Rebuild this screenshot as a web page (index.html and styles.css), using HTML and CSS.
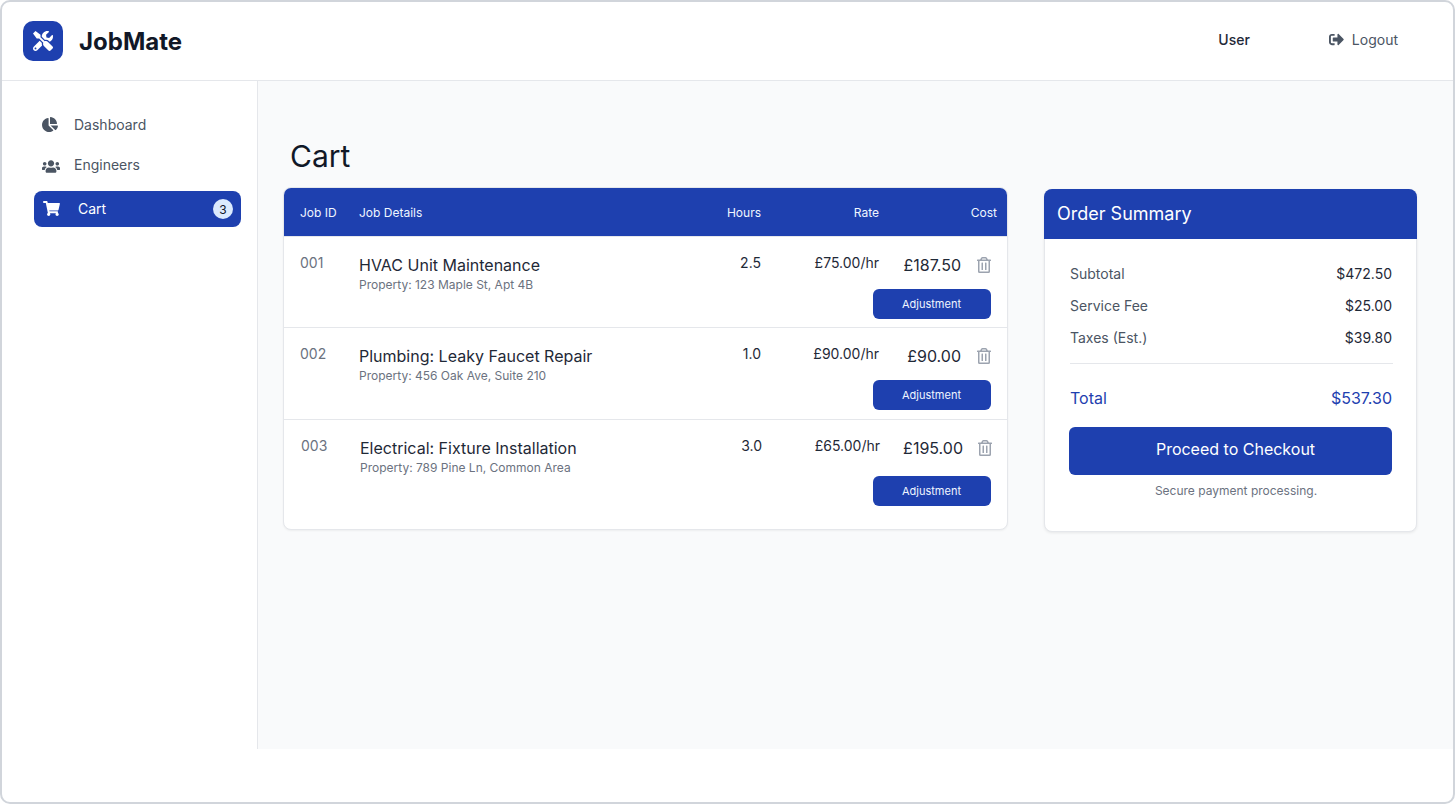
FILE: index.html
```html
<!DOCTYPE html>
<html lang="en">
<head>
    <meta charset="UTF-8">
    <meta name="viewport" content="width=device-width, initial-scale=1.0">
    <title>JobMate - Cart</title>
    <link rel="stylesheet" href="styles.css">
</head>
<body>
    <div class="frame">
        <header class="topbar">
            <div class="brand">
                <div class="brand-logo">
                    <svg class="icon-tools" viewBox="0 0 512 512"><path d="M501.1 395.7L384 278.6c-23.1-23.1-57.6-27.6-85.4-13.9L192 158.1V96L64 0 0 64l96 128h62.1l106.6 106.6c-13.6 27.8-9.2 62.3 13.9 85.4l117.1 117.1c14.6 14.6 38.2 14.6 52.7 0l52.7-52.7c14.5-14.6 14.5-38.2 0-52.7zM331.7 225c28.3 0 54.9 11 74.9 31l19.4 19.4c15.8-6.9 30.8-16.5 43.8-29.5 37.1-37.1 49.7-89.3 37.9-136.7-2.2-9-13.5-12.1-20.1-5.5l-74.4 74.4-67.9-11.3L334 98.9l74.4-74.4c6.6-6.6 3.4-17.9-5.7-20.2-47.4-11.7-99.6.9-136.6 37.9-28.5 28.5-41.9 66.1-41.2 103.6l82.1 82.1c8.1-1.9 16.5-2.9 24.7-2.9zm-103.9 82l-56.7-56.7L18.7 402.8c-25 25-25 65.5 0 90.5s65.5 25 90.5 0l123.6-123.6c-7.6-19.9-9.9-41.6-5-62.7zM64 472c-13.2 0-24-10.8-24-24 0-13.3 10.7-24 24-24s24 10.7 24 24c0 13.2-10.7 24-24 24z"/></svg>
                </div>
                <span class="brand-name">JobMate</span>
            </div>
            <div class="topbar-right">
                <span class="user-name">User</span>
                <a class="logout" href="#">
                    <svg class="icon-logout" viewBox="0 0 512 512"><path d="M497 273L329 441c-15 15-41 4.5-41-17v-96H152c-13.3 0-24-10.7-24-24v-96c0-13.3 10.7-24 24-24h136V88c0-21.4 25.9-32 41-17l168 168c9.3 9.4 9.3 24.6 0 34zM192 436v-40c0-6.6-5.4-12-12-12H96c-17.7 0-32-14.3-32-32V160c0-17.7 14.3-32 32-32h84c6.6 0 12-5.4 12-12V76c0-6.6-5.4-12-12-12H96c-53 0-96 43-96 96v192c0 53 43 96 96 96h84c6.6 0 12-5.4 12-12z"/></svg>
                    Logout
                </a>
            </div>
        </header>

        <div class="shell">
            <nav class="sidebar">
                <a class="nav-item" href="#">
                    <svg class="nav-icon" viewBox="0 0 544 512"><path d="M527.79 288H290.5l158.03 158.03c6.04 6.04 15.98 6.53 22.19.68 38.7-36.46 65.32-85.61 73.13-140.86 1.34-9.46-6.51-17.85-16.06-17.85zm-15.83-64.8C503.72 103.74 408.26 8.28 288.8.04 279.68-.59 272 7.1 272 16.24V240h223.77c9.14 0 16.82-7.68 16.19-16.8zM224 288V50.71c0-9.55-8.39-17.4-17.84-16.06C86.99 51.49-4.1 155.6.14 280.37 4.5 408.51 114.83 513.59 243.03 511.98c50.4-.63 96.97-16.87 135.26-44.03 7.9-5.6 8.42-17.23 1.57-24.08L224 288z"/></svg>
                    Dashboard
                </a>
                <a class="nav-item" href="#">
                    <svg class="nav-icon icon-users" viewBox="0 0 640 512"><path d="M96 224c35.3 0 64-28.7 64-64s-28.7-64-64-64-64 28.7-64 64 28.7 64 64 64zm448 0c35.3 0 64-28.7 64-64s-28.7-64-64-64-64 28.7-64 64 28.7 64 64 64zm32 32h-64c-17.6 0-33.5 7.1-45.1 18.6 40.3 22.1 68.9 62 75.1 109.4h66c17.7 0 32-14.3 32-32v-32c0-35.3-28.7-64-64-64zm-256 0c61.9 0 112-50.1 112-112S381.9 32 320 32 208 82.1 208 144s50.1 112 112 112zm76.8 32h-8.3c-20.8 10-43.9 16-68.5 16s-47.6-6-68.5-16h-8.3C179.6 288 128 339.6 128 403.2V432c0 26.5 21.5 48 48 48h288c26.5 0 48-21.5 48-48v-28.8c0-63.6-51.6-115.2-115.2-115.2zm-223.7-13.4C161.5 263.1 145.6 256 128 256H64c-35.3 0-64 28.7-64 64v32c0 17.7 14.3 32 32 32h65.9c6.3-47.4 34.9-87.3 75.2-109.4z"/></svg>
                    Engineers
                </a>
                <a class="nav-item active" href="#">
                    <svg class="nav-icon" viewBox="0 0 576 512"><path d="M528.12 301.319l47.273-208C578.806 78.301 567.391 64 551.99 64H159.208l-9.166-44.81C147.758 8.021 137.93 0 126.529 0H24C10.745 0 0 10.745 0 24v16c0 13.255 10.745 24 24 24h69.883l70.248 343.435C147.325 417.1 136 435.222 136 456c0 30.928 25.072 56 56 56s56-25.072 56-56c0-15.674-6.447-29.835-16.824-40h209.647C430.447 426.165 424 440.326 424 456c0 30.928 25.072 56 56 56s56-25.072 56-56c0-22.172-12.888-41.332-31.579-50.405l5.517-24.276c3.413-15.018-8.002-29.319-23.403-29.319H218.117l-6.545-32h293.145c11.206 0 20.92-7.754 23.403-18.681z"/></svg>
                    Cart
                    <span class="nav-badge">3</span>
                </a>
            </nav>

            <main class="content">
                <h1 class="page-title">Cart</h1>
                <div class="columns">
                    <section class="jobs-card">
                        <div class="jobs-head">
                            <span>Job ID</span>
                            <span>Job Details</span>
                            <span class="right">Hours</span>
                            <span class="right">Rate</span>
                            <span class="right">Cost</span>
                        </div>

                        <div class="job-row">
                            <span class="job-id">001</span>
                            <div class="job-details">
                                <div class="job-title">HVAC Unit Maintenance</div>
                                <div class="job-property">Property: 123 Maple St, Apt 4B</div>
                            </div>
                            <span class="job-num">2.5</span>
                            <span class="job-num">£75.00/hr</span>
                            <div class="job-cost">
                                £187.50
                                <svg class="icon-trash" viewBox="0 0 448 512"><path d="M268 416h24a12 12 0 0 0 12-12V188a12 12 0 0 0-12-12h-24a12 12 0 0 0-12 12v216a12 12 0 0 0 12 12zM432 80h-82.41l-34-56.7A48 48 0 0 0 274.41 0H173.59a48 48 0 0 0-41.16 23.3L98.41 80H16A16 16 0 0 0 0 96v16a16 16 0 0 0 16 16h16v336a48 48 0 0 0 48 48h288a48 48 0 0 0 48-48V128h16a16 16 0 0 0 16-16V96a16 16 0 0 0-16-16zM171.84 50.91A6 6 0 0 1 177 48h94a6 6 0 0 1 5.15 2.91L293.61 80H154.39zM368 464H80V128h288zm-212-48h24a12 12 0 0 0 12-12V188a12 12 0 0 0-12-12h-24a12 12 0 0 0-12 12v216a12 12 0 0 0 12 12z"/></svg>
                            </div>
                            <button class="adjust-btn">Adjustment</button>
                        </div>

                        <div class="job-row">
                            <span class="job-id">002</span>
                            <div class="job-details">
                                <div class="job-title">Plumbing: Leaky Faucet Repair</div>
                                <div class="job-property">Property: 456 Oak Ave, Suite 210</div>
                            </div>
                            <span class="job-num">1.0</span>
                            <span class="job-num">£90.00/hr</span>
                            <div class="job-cost">
                                £90.00
                                <svg class="icon-trash" viewBox="0 0 448 512"><path d="M268 416h24a12 12 0 0 0 12-12V188a12 12 0 0 0-12-12h-24a12 12 0 0 0-12 12v216a12 12 0 0 0 12 12zM432 80h-82.41l-34-56.7A48 48 0 0 0 274.41 0H173.59a48 48 0 0 0-41.16 23.3L98.41 80H16A16 16 0 0 0 0 96v16a16 16 0 0 0 16 16h16v336a48 48 0 0 0 48 48h288a48 48 0 0 0 48-48V128h16a16 16 0 0 0 16-16V96a16 16 0 0 0-16-16zM171.84 50.91A6 6 0 0 1 177 48h94a6 6 0 0 1 5.15 2.91L293.61 80H154.39zM368 464H80V128h288zm-212-48h24a12 12 0 0 0 12-12V188a12 12 0 0 0-12-12h-24a12 12 0 0 0-12 12v216a12 12 0 0 0 12 12z"/></svg>
                            </div>
                            <button class="adjust-btn">Adjustment</button>
                        </div>

                        <div class="job-row last">
                            <span class="job-id">003</span>
                            <div class="job-details">
                                <div class="job-title">Electrical: Fixture Installation</div>
                                <div class="job-property">Property: 789 Pine Ln, Common Area</div>
                            </div>
                            <span class="job-num">3.0</span>
                            <span class="job-num">£65.00/hr</span>
                            <div class="job-cost">
                                £195.00
                                <svg class="icon-trash" viewBox="0 0 448 512"><path d="M268 416h24a12 12 0 0 0 12-12V188a12 12 0 0 0-12-12h-24a12 12 0 0 0-12 12v216a12 12 0 0 0 12 12zM432 80h-82.41l-34-56.7A48 48 0 0 0 274.41 0H173.59a48 48 0 0 0-41.16 23.3L98.41 80H16A16 16 0 0 0 0 96v16a16 16 0 0 0 16 16h16v336a48 48 0 0 0 48 48h288a48 48 0 0 0 48-48V128h16a16 16 0 0 0 16-16V96a16 16 0 0 0-16-16zM171.84 50.91A6 6 0 0 1 177 48h94a6 6 0 0 1 5.15 2.91L293.61 80H154.39zM368 464H80V128h288zm-212-48h24a12 12 0 0 0 12-12V188a12 12 0 0 0-12-12h-24a12 12 0 0 0-12 12v216a12 12 0 0 0 12 12z"/></svg>
                            </div>
                            <button class="adjust-btn">Adjustment</button>
                        </div>
                    </section>

                    <aside class="summary-card">
                        <h2 class="summary-title">Order Summary</h2>
                        <div class="summary-body">
                            <div class="summary-row"><span>Subtotal</span><span class="summary-value">$472.50</span></div>
                            <div class="summary-row"><span>Service Fee</span><span class="summary-value">$25.00</span></div>
                            <div class="summary-row"><span>Taxes (Est.)</span><span class="summary-value">$39.80</span></div>
                            <div class="summary-total"><span>Total</span><span>$537.30</span></div>
                            <button class="checkout-btn">Proceed to Checkout</button>
                            <p class="secure-note">Secure payment processing.</p>
                        </div>
                    </aside>
                </div>
            </main>
        </div>
    </div>
</body>
</html>
```

FILE: styles.css
```css
* {
    box-sizing: border-box;
}

body {
    font-family: Inter, "Liberation Sans", sans-serif;
    margin: 0;
    background-color: #fff;
    color: #111827;
}

a {
    text-decoration: none;
}

.frame {
    width: 1455px;
    height: 804px;
    border: 2px solid #d1d5db;
    border-radius: 10px;
    overflow: hidden;
    background-color: #fff;
}

.topbar {
    display: flex;
    justify-content: space-between;
    align-items: center;
    height: 79px;
    padding: 0 55px 0 21px;
    border-bottom: 1px solid #e5e7eb;
}

.brand {
    display: flex;
    align-items: center;
    gap: 16px;
}

.brand-logo {
    display: flex;
    align-items: center;
    justify-content: center;
    width: 40px;
    height: 40px;
    border-radius: 10px;
    background-color: #1e40af;
}

.icon-tools {
    width: 20px;
    height: 20px;
    fill: #fff;
}

.brand-name {
    font-size: 24px;
    font-weight: 700;
}

.topbar-right {
    display: flex;
    align-items: center;
    gap: 79px;
    margin-bottom: 3px;
    font-size: 14px;
}

.user-name {
    font-weight: 500;
    color: #1f2937;
}

.logout {
    display: flex;
    align-items: center;
    gap: 8px;
    color: #4b5563;
}

.icon-logout {
    width: 15px;
    height: 15px;
    fill: #4b5563;
}

.shell {
    display: flex;
    height: 668px;
}

.sidebar {
    flex: none;
    display: flex;
    flex-direction: column;
    gap: 4px;
    width: 256px;
    padding: 26px 16px 0 32px;
    border-right: 1px solid #e5e7eb;
}

.nav-item {
    display: flex;
    align-items: center;
    height: 36px;
    padding: 0 0 1px 7px;
    font-size: 14px;
    color: #4b5563;
}

.nav-icon {
    flex: none;
    width: 18px;
    height: 15px;
    margin-right: 15px;
    fill: #4b5563;
}

.nav-icon.icon-users {
    margin: 4px 14px 0 1px;
}

.nav-item.active {
    margin-top: 4px;
    padding: 0 8px 1px 9px;
    border-radius: 8px;
    background-color: #1e40af;
    color: #fff;
}

.nav-item.active .nav-icon {
    width: 17px;
    margin-right: 18px;
    fill: #fff;
}

.nav-badge {
    display: flex;
    align-items: center;
    justify-content: center;
    width: 20px;
    height: 20px;
    margin: 1px 0 0 auto;
    border-radius: 50%;
    background-color: #dbeafe;
    color: #111827;
    font-size: 12px;
}

.content {
    flex: 1;
    padding: 57px 36px 0 25px;
    background-color: #f9fafb;
}

.page-title {
    margin: 0 0 13px 7px;
    font-size: 30px;
    line-height: 36px;
    font-weight: 400;
}

.columns {
    display: flex;
    align-items: flex-start;
    gap: 36px;
}

.jobs-card {
    width: 725px;
    height: 343px;
    border: 1px solid #e5e7eb;
    border-radius: 8px;
    overflow: hidden;
    background-color: #fff;
    box-shadow: 0 1px 2px rgba(0, 0, 0, 0.05);
}

.jobs-head,
.job-row {
    display: grid;
    grid-template-columns: 59px 1fr 80px 118px 112px;
}

.jobs-head {
    grid-template-columns: 59px 1fr 80px 118px 118px;
    align-items: center;
    height: 49px;
    padding: 0 10px 0 16px;
    border-bottom: 1px solid #e5e7eb;
    background-color: #1e40af;
    color: #eff6ff;
    font-size: 12px;
}

.right {
    text-align: right;
}

.job-row {
    grid-template-rows: 24px auto;
    row-gap: 12px;
    padding: 16px 16px 8px 16px;
    border-bottom: 1px solid #e5e7eb;
}

.job-row:nth-child(3) {
    padding-bottom: 9px;
}

.job-row.last {
    row-gap: 16px;
    padding: 16px 15px 0 17px;
    border-bottom: none;
}

.job-id {
    font-size: 14px;
    line-height: 20px;
    color: #6b7280;
}

.job-details {
    grid-column: 2;
    grid-row: 1 / 3;
}

.job-title {
    font-size: 16px;
    line-height: 24px;
    color: #1f2937;
}

.job-property {
    font-size: 12px;
    line-height: 16px;
    color: #6b7280;
}

.job-num {
    font-size: 14px;
    line-height: 20px;
    text-align: right;
    color: #1f2937;
}

.job-cost {
    display: flex;
    justify-content: flex-end;
    align-items: center;
    gap: 16px;
    font-size: 16px;
    line-height: 24px;
    color: #1f2937;
}

.job-row.last .job-cost {
    gap: 15px;
}

.icon-trash {
    flex: none;
    width: 14px;
    height: 16px;
    fill: #9ca3af;
}

.adjust-btn {
    grid-column: 4 / 6;
    justify-self: end;
    width: 118px;
    height: 30px;
    padding: 0 1px 0 0;
    border: none;
    border-radius: 6px;
    background-color: #1e40af;
    color: #eff6ff;
    font-family: inherit;
    font-size: 11px;
    cursor: pointer;
}

.job-row.last .adjust-btn {
    margin-right: 1px;
}

.summary-card {
    width: 373px;
    height: 343px;
    margin-top: 2px;
    border-radius: 8px;
    border: 1px solid #e5e7eb;
    background-color: #fff;
    box-shadow: 0 1px 3px rgba(0, 0, 0, 0.08);
}

.summary-title {
    margin: -1px -1px 0;
    padding: 0 13px;
    height: 50px;
    border-radius: 8px 8px 0 0;
    background-color: #1e40af;
    color: #fff;
    font-size: 18px;
    line-height: 49px;
    font-weight: 400;
}

.summary-body {
    display: flex;
    flex-direction: column;
    padding: 25px 23px 0 25px;
}

.summary-row {
    display: flex;
    justify-content: space-between;
    margin-bottom: 12px;
    font-size: 14px;
    line-height: 20px;
    color: #4b5563;
}

.summary-value {
    padding-right: 1px;
    color: #1f2937;
}

.summary-total {
    display: flex;
    justify-content: space-between;
    margin-top: 3px;
    padding: 22px 1px 0 0;
    border-top: 1px solid #e5e7eb;
    font-size: 16px;
    line-height: 24px;
    color: #1e40af;
}

.checkout-btn {
    height: 48px;
    margin: 17px 1px 0 -1px;
    padding: 0 0 4px 10px;
    border: none;
    border-radius: 6px;
    background-color: #1e40af;
    color: #fff;
    font-family: inherit;
    font-size: 16px;
    cursor: pointer;
}

.secure-note {
    margin: 8px 0 0;
    padding-left: 9px;
    font-size: 12px;
    line-height: 16px;
    text-align: center;
    color: #6b7280;
}
```
